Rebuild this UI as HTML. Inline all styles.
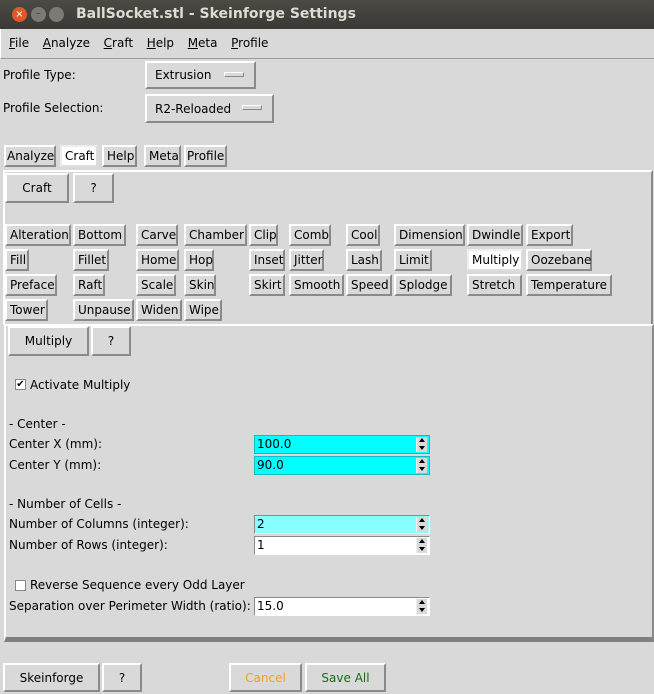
<!DOCTYPE html>
<html><head><style>
*{box-sizing:border-box;margin:0;padding:0}
body{width:654px;height:694px;background:#d9d9d9;font-family:"DejaVu Sans","Liberation Sans",sans-serif;font-size:12px;color:#000;position:relative;overflow:hidden}
.a{position:absolute;white-space:nowrap}
.b{position:absolute;background:#d9d9d9;border:2px solid;border-color:#fff #8a8a8a #8a8a8a #fff;display:flex;align-items:center;justify-content:center;white-space:nowrap;font-size:12px}
.p{height:22px;justify-content:flex-start;padding-left:3px;border-width:2px}
.w{background:#fff}
.sp{position:absolute;height:19px;border:1px solid;border-color:#8a8a8a #fff #fff #8a8a8a;background:#fff;padding-left:2px;line-height:17px}
.sp i{position:absolute;right:2px;top:1px;width:11px;height:15px;background:#d9d9d9;border-left:1px solid #eee}
.sp i:before{content:"";position:absolute;left:2px;top:1px;border:3.5px solid transparent;border-bottom:4px solid #000;border-top:0}
.sp i:after{content:"";position:absolute;left:2px;top:9px;border:3.5px solid transparent;border-top:4px solid #000;border-bottom:0}
.c{background:#00ffff;border-color:#10c0c0}
u{text-decoration:underline}
</style></head><body>
<div class="a" style="left:0;top:0;width:654px;height:29px;background:linear-gradient(#4b4a45,#3a3935)"></div>
<div class="a" style="left:12px;top:7px;width:15px;height:15px;border-radius:50%;background:#e2572a;color:#fff;font-size:10px;text-align:center;line-height:15px">×</div>
<div class="a" style="left:31px;top:7px;width:15px;height:15px;border-radius:50%;background:#7b7a75;color:#333;font-size:10px;text-align:center;line-height:14px">–</div>
<div class="a" style="left:49px;top:7px;width:15px;height:15px;border-radius:50%;background:#7b7a75"></div>
<div class="a" style="left:76px;top:6px;color:#dfdbd2;font-weight:bold;font-size:14px">BallSocket.stl - Skeinforge Settings</div>
<div class="a" style="left:0;top:29px;width:654px;height:30px;border-bottom:1px solid #9a9a9a;border-left:1px solid #fff"></div>
<div class="a" style="left:9px;top:36px;word-spacing:3px"><u>F</u>ile &nbsp;<u>A</u>nalyze &nbsp;<u>C</u>raft &nbsp;<u>H</u>elp &nbsp;<u>M</u>eta &nbsp;<u>P</u>rofile</div>
<div class="a" style="left:3px;top:68px">Profile Type:</div>
<div class="b" style="left:145px;top:61px;width:111px;height:28px;justify-content:flex-start;padding-left:8px">Extrusion<span style="position:absolute;right:10px;top:9px;width:20px;height:5px;background:#d9d9d9;border:1px solid;border-color:#fff #888 #888 #fff"></span></div>
<div class="a" style="left:3px;top:101px">Profile Selection:</div>
<div class="b" style="left:145px;top:94px;width:129px;height:29px;justify-content:flex-start;padding-left:8px">R2-Reloaded<span style="position:absolute;right:10px;top:9px;width:20px;height:5px;background:#d9d9d9;border:1px solid;border-color:#fff #888 #888 #fff"></span></div>
<div class="b p" style="left:4px;top:145px;width:52px;height:22px;padding-left:1px">Analyze</div>
<div class="b p w" style="left:60px;top:145px;width:38px;border-color:#eee #ddd #ddd #eee">Craft</div>
<div class="b p" style="left:102px;top:145px;width:35px">Help</div>
<div class="b p" style="left:144px;top:145px;width:37px">Meta</div>
<div class="b p" style="left:184px;top:145px;width:43px;padding-left:1px">Profile</div>
<div class="a" style="left:3px;top:170px;width:650px;height:156px;border:2px solid;border-color:#fff #8a8a8a #8a8a8a #fff"></div>
<div class="b" style="left:5px;top:173px;width:64px;height:30px">Craft</div>
<div class="b" style="left:73px;top:173px;width:41px;height:30px">?</div>
<div class="b p" style="left:5px;top:224px;width:66px">Alteration</div>
<div class="b p" style="left:73px;top:224px;width:53px">Bottom</div>
<div class="b p" style="left:136px;top:224px;width:42px">Carve</div>
<div class="b p" style="left:184px;top:224px;width:63px">Chamber</div>
<div class="b p" style="left:249px;top:224px;width:29px">Clip</div>
<div class="b p" style="left:289px;top:224px;width:42px">Comb</div>
<div class="b p" style="left:346px;top:224px;width:34px">Cool</div>
<div class="b p" style="left:394px;top:224px;width:71px">Dimension</div>
<div class="b p" style="left:467px;top:224px;width:56px">Dwindle</div>
<div class="b p" style="left:526px;top:224px;width:47px">Export</div>
<div class="b p" style="left:5px;top:249px;width:24px">Fill</div>
<div class="b p" style="left:73px;top:249px;width:36px">Fillet</div>
<div class="b p" style="left:136px;top:249px;width:43px">Home</div>
<div class="b p" style="left:184px;top:249px;width:30px">Hop</div>
<div class="b p" style="left:249px;top:249px;width:36px">Inset</div>
<div class="b p" style="left:289px;top:249px;width:35px">Jitter</div>
<div class="b p" style="left:346px;top:249px;width:36px">Lash</div>
<div class="b p" style="left:394px;top:249px;width:38px">Limit</div>
<div class="b p w" style="left:467px;top:249px;width:56px;border-color:#eee #ddd #ddd #eee">Multiply</div>
<div class="b p" style="left:526px;top:249px;width:66px">Oozebane</div>
<div class="b p" style="left:5px;top:274px;width:52px">Preface</div>
<div class="b p" style="left:73px;top:274px;width:32px">Raft</div>
<div class="b p" style="left:136px;top:274px;width:40px">Scale</div>
<div class="b p" style="left:184px;top:274px;width:32px">Skin</div>
<div class="b p" style="left:249px;top:274px;width:36px">Skirt</div>
<div class="b p" style="left:289px;top:274px;width:55px">Smooth</div>
<div class="b p" style="left:346px;top:274px;width:46px">Speed</div>
<div class="b p" style="left:394px;top:274px;width:58px">Splodge</div>
<div class="b p" style="left:467px;top:274px;width:55px">Stretch</div>
<div class="b p" style="left:526px;top:274px;width:86px">Temperature</div>
<div class="b p" style="left:5px;top:299px;width:43px">Tower</div>
<div class="b p" style="left:73px;top:299px;width:61px">Unpause</div>
<div class="b p" style="left:136px;top:299px;width:46px">Widen</div>
<div class="b p" style="left:184px;top:299px;width:38px">Wipe</div>
<div class="a" style="left:4px;top:324px;width:650px;height:318px;border:2px solid;border-color:#fff #8a8a8a #8a8a8a #fff;border-bottom:5px solid #808080"></div>
<div class="b" style="left:8px;top:326px;width:81px;height:30px">Multiply</div>
<div class="b" style="left:91px;top:326px;width:40px;height:30px">?</div>
<div class="a" style="left:15px;top:379px;width:11px;height:11px;background:#fff;border:1px solid #888;font-size:10px;line-height:9px;text-align:center">✔</div>
<div class="a" style="left:30px;top:378px">Activate Multiply</div>
<div class="a" style="left:9px;top:417px">- Center -</div>
<div class="a" style="left:9px;top:437px">Center X (mm):</div>
<div class="sp c" style="left:254px;top:435px;width:176px">100.0<i></i></div>
<div class="a" style="left:9px;top:458px">Center Y (mm):</div>
<div class="sp c" style="left:254px;top:456px;width:176px">90.0<i></i></div>
<div class="a" style="left:9px;top:497px">- Number of Cells -</div>
<div class="a" style="left:9px;top:517px">Number of Columns (integer):</div>
<div class="sp" style="left:254px;top:515px;width:176px;background:#88ffff">2<i></i></div>
<div class="a" style="left:9px;top:538px">Number of Rows (integer):</div>
<div class="sp" style="left:254px;top:536px;width:176px">1<i></i></div>
<div class="a" style="left:15px;top:580px;width:11px;height:11px;background:#fff;border:1px solid #888"></div>
<div class="a" style="left:30px;top:578px">Reverse Sequence every Odd Layer</div>
<div class="a" style="left:9px;top:599px">Separation over Perimeter Width (ratio):</div>
<div class="sp" style="left:254px;top:597px;width:176px">15.0<i></i></div>
<div class="b" style="left:3px;top:663px;width:97px;height:29px">Skeinforge</div>
<div class="b" style="left:102px;top:663px;width:40px;height:29px">?</div>
<div class="b" style="left:229px;top:663px;width:73px;height:29px;color:#f0a020">Cancel</div>
<div class="b" style="left:305px;top:663px;width:81px;height:29px;color:#1a6a1a">Save All</div>
</body></html>
